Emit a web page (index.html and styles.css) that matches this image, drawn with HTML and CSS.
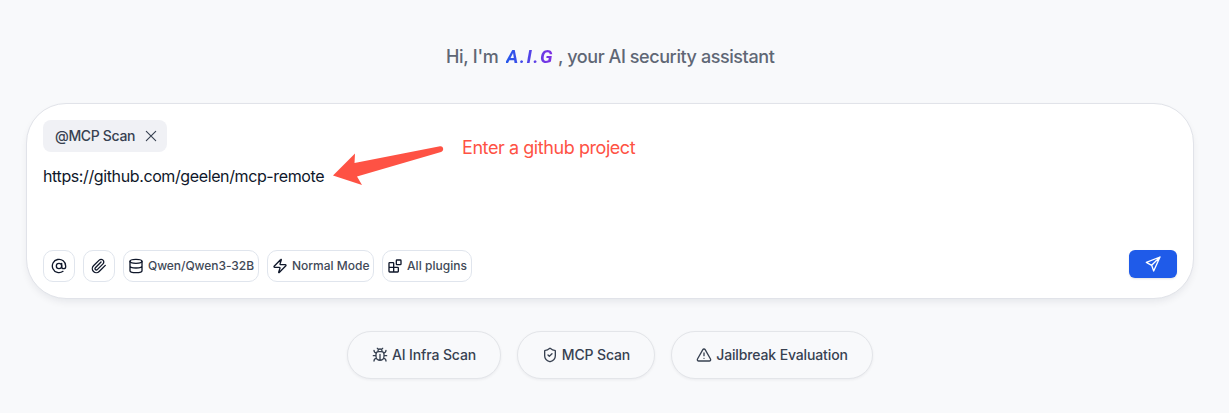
FILE: index.html
```html
<!DOCTYPE html>
<html lang="en">
<head>
<meta charset="utf-8">
<title>A.I.G</title>
<link rel="stylesheet" href="styles.css">
</head>
<body>
<main class="page">
  <h1 class="greeting"><span class="hi">Hi, I'm</span><span class="brand">A.I.G</span><span class="rest">, your AI security assistant</span></h1>

  <section class="composer">
    <div class="tag"><span class="tag-label">@MCP Scan</span>
      <svg class="icon close" viewBox="0 0 24 24"><path d="M19 5 5 19M5 5l14 14"/></svg>
    </div>
    <p class="prompt"><span class="prompt-text">https://github.com/geelen/mcp-remote</span></p>
    <div class="toolbar">
      <button class="tool square"><svg class="icon" viewBox="0 0 24 24"><circle cx="12" cy="12" r="4"/><path d="M16 8v5a3 3 0 0 0 6 0v-1a10 10 0 1 0-4 8"/></svg></button>
      <button class="tool square"><svg class="icon" viewBox="0 0 24 24"><path d="m21.44 11.05-9.19 9.19a6 6 0 0 1-8.49-8.49l8.57-8.57A4 4 0 1 1 18 8.84l-8.59 8.57a2 2 0 0 1-2.83-2.83l8.49-8.48"/></svg></button>
      <button class="tool model"><svg class="icon" viewBox="0 0 24 24"><ellipse cx="12" cy="5" rx="9" ry="3"/><path d="M3 5v14a9 3 0 0 0 18 0V5M3 12a9 3 0 0 0 18 0"/></svg><span>Qwen/Qwen3-32B</span></button>
      <button class="tool mode"><svg class="icon" viewBox="0 0 24 24"><path d="M4 14a1 1 0 0 1-.78-1.63l9.9-10.2a.5.5 0 0 1 .86.46l-1.92 6.02A1 1 0 0 0 13 10h7a1 1 0 0 1 .78 1.63l-9.9 10.2a.5.5 0 0 1-.86-.46l1.92-6.02A1 1 0 0 0 11 14z"/></svg><span>Normal Mode</span></button>
      <button class="tool plugins"><svg class="icon" viewBox="0 0 24 24"><rect width="7" height="7" x="14" y="3" rx="1"/><path d="M10 21V8a1 1 0 0 0-1-1H4a1 1 0 0 0-1 1v12a1 1 0 0 0 1 1h12a1 1 0 0 0 1-1v-5a1 1 0 0 0-1-1H3"/></svg><span>All plugins</span></button>
      <button class="send"><svg class="icon" viewBox="0 0 24 24"><path d="M22.500 1.500 13 22.500l-3-8.500-8-4.500ZM22.500 1.500 10 14"/></svg></button>
    </div>
    <div class="note">
      <svg class="arrow" viewBox="0 0 112 42"><path d="M0 29.600 22 7.500 21.500 17 107 .3c3.600-.5 4.400 4.400 1 5.600L24 30.500 29 39Z"/></svg>
      <span class="note-text">Enter a github project</span>
    </div>
  </section>

  <nav class="shortcuts">
    <button class="pill infra"><svg class="icon" viewBox="0 0 24 24"><path d="m8 2 1.880 1.880M14.120 3.880 16 2M9 7.130v-1a3.003 3.003 0 1 1 6 0v1M12 20c-3.300 0-6-2.700-6-6v-3a4 4 0 0 1 4-4h4a4 4 0 0 1 4 4v3c0 3.300-2.700 6-6 6M12 20v-9M6.530 9C4.600 8.800 3 7.100 3 5M6 13H2M3 21c0-2.100 1.700-3.900 3.800-4M20.970 5c0 2.100-1.600 3.800-3.500 4M22 13h-4M17.200 17c2.100.1 3.800 1.900 3.800 4"/></svg><span>AI Infra Scan</span></button>
    <button class="pill scan"><svg class="icon" viewBox="0 0 24 24"><path d="M20 13c0 5-3.500 7.500-7.660 8.950a1 1 0 0 1-.67-.01C7.500 20.500 4 18 4 13V6a1 1 0 0 1 1-1c2 0 4.500-1.200 6.240-2.720a1.170 1.170 0 0 1 1.520 0C14.510 3.810 17 5 19 5a1 1 0 0 1 1 1z"/><path d="m9 12 2 2 4-4"/></svg><span>MCP Scan</span></button>
    <button class="pill jail"><svg class="icon" viewBox="0 0 24 24"><path d="m21.730 18-8-14a2 2 0 0 0-3.480 0l-8 14A2 2 0 0 0 4 21h16a2 2 0 0 0 1.730-3M12 9v4M12 17h.01"/></svg><span>Jailbreak Evaluation</span></button>
  </nav>
</main>
</body>
</html>
```
FILE: styles.css
```css
* { box-sizing: border-box; }
body { margin: 0; background: #f8f9fb; font-family: Inter, "Liberation Sans", sans-serif; color: #0f172a; }
button { font: inherit; color: inherit; margin: 0; }
.page { height: 413px; padding: 43px 35px 0 26px; overflow: hidden; }
.icon { width: 16px; height: 16px; flex: none; fill: none; stroke: currentColor; stroke-width: 2; stroke-linecap: round; stroke-linejoin: round; }

.greeting { display: flex; align-items: center; margin: 0 0 32px 420px; height: 28px; font-size: 18px; line-height: 28px; font-weight: 500; color: #5f6775; white-space: nowrap; }
.hi { width: 60px; letter-spacing: -.3px; }
.brand { width: 52px; font-family: Roboto, sans-serif; font-style: italic; font-weight: 700; font-size: 19px; letter-spacing: 1.4px; background: linear-gradient(90deg, #2458eb, #8a2be2); background-clip: text; -webkit-background-clip: text; color: transparent; }
.rest { letter-spacing: -.42px; }

.composer { position: relative; display: flex; flex-direction: column; align-items: flex-start; width: 1168px; height: 196px; padding: 16px; background: #fff; border: 1px solid #e1e3e9; border-radius: 40px; box-shadow: 0 4px 8px -2px rgba(15,23,42,.09); }
.tag { display: flex; align-items: center; justify-content: space-between; width: 124px; height: 32px; padding: 0 8px 0 12px; border-radius: 8px; background: #f0f1f5; color: #374151; font-size: 14px; font-weight: 500; white-space: nowrap; }
.tag-label { letter-spacing: -.33px; padding-bottom: 1px; }
.close { stroke-width: 1.7; }
.prompt { margin: 12px 0 0; font-size: 16px; line-height: 24px; letter-spacing: -.385px; color: #0f172a; }
.toolbar { display: flex; gap: 8px; width: 1134px; margin-top: auto; align-items: flex-start; }
.tool { display: flex; align-items: center; gap: 4px; height: 32px; padding: 0 4px; border: 1px solid #e0e5ed; border-radius: 10px; background: #fff; font-size: 12px; font-weight: 500; white-space: nowrap; }
.tool span { color: #414957; padding-bottom: 2px; }
.square { width: 32px; justify-content: center; }
.model { width: 136px; letter-spacing: -.05px; }
.mode { width: 107px; }
.plugins { width: 90px; letter-spacing: .05px; }
.send { display: flex; align-items: center; justify-content: center; width: 48px; height: 28px; margin-left: auto; border: 0; border-radius: 6px; background: #1f5be9; color: #fff; box-shadow: 0 1px 2px rgba(15,23,42,.12); }
.note { position: absolute; left: 306px; top: 33px; display: flex; color: #fe5244; }
.arrow { width: 112px; height: 42px; margin-top: 9px; fill: currentColor; }
.note-text { margin-left: 17px; font-size: 18px; line-height: 22px; letter-spacing: -.43px; white-space: nowrap; }

.shortcuts { display: flex; gap: 16px; margin: 32px 0 0 321px; }
.pill { display: flex; align-items: center; justify-content: center; gap: 4px; height: 48px; padding: 0; border: 1px solid #e3e5e9; border-radius: 24px; background: #f8f9fb; color: #374151; font-size: 14px; font-weight: 500; letter-spacing: -.13px; white-space: nowrap; box-shadow: 0 1px 3px rgba(15,23,42,.06); }
.pill span { padding-bottom: 2px; }
.infra { width: 154px; }
.scan { width: 138px; }
.jail { width: 202px; }
```
